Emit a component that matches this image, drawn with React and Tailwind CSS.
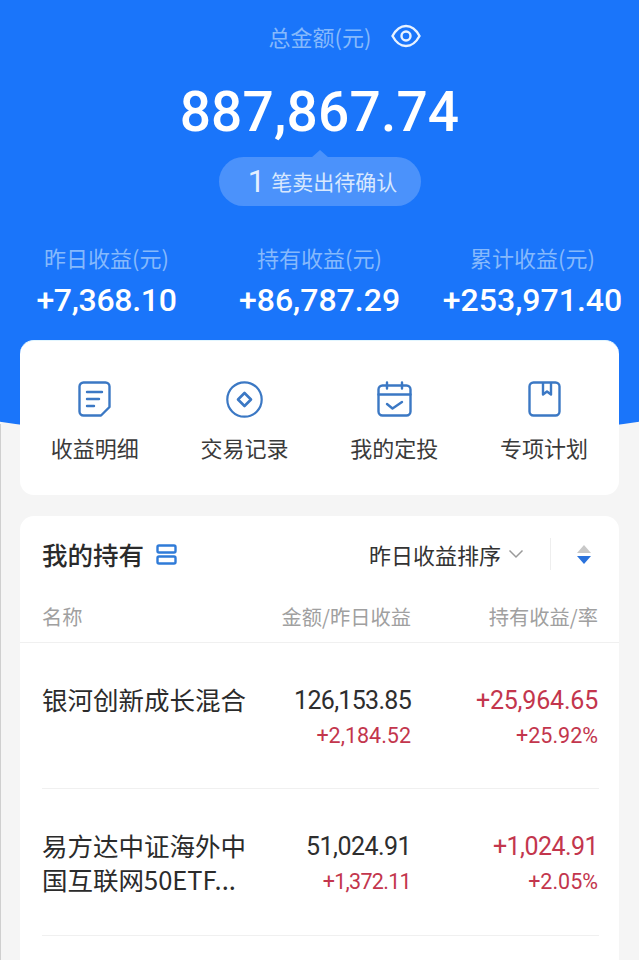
const cjk = "font-['Noto_Sans_CJK_SC','Noto_Sans',sans-serif]"
const num = "font-['Roboto','Noto_Sans_CJK_SC',sans-serif]"

const stats = [
  { label: '昨日收益(元)', value: '+7,368.10', cls: 'tracking-[-0.3px]' },
  { label: '持有收益(元)', value: '+86,787.29', cls: '' },
  { label: '累计收益(元)', value: '+253,971.40', cls: '' },
]

const holdings = [
  {
    name: ['银河创新成长混合'],
    rowCls: 'h-[146px]',
    amount: '126,153.85',
    amountCls: 'tracking-[-0.7px]',
    daily: '+2,184.52',
    dailyCls: '',
    gain: '+25,964.65',
    gainCls: 'tracking-[-0.2px]',
    rate: '+25.92%',
  },
  {
    name: ['易方达中证海外中', '国互联网50ETF...'],
    rowCls: 'h-[147px]',
    amount: '51,024.91',
    amountCls: 'tracking-[-0.55px]',
    daily: '+1,372.11',
    dailyCls: 'tracking-[-0.7px]',
    gain: '+1,024.91',
    gainCls: 'tracking-[-0.55px]',
    rate: '+2.05%',
  },
]

function DocIcon() {
  return (
    <svg width="33" height="36" viewBox="0 0 33 36" fill="none" stroke="#3b78c4" strokeWidth="2.4" strokeLinecap="round" strokeLinejoin="round">
      <path d="M5.500 1.500h22a4 4 0 0 1 4 4V26l-8.500 8.500H5.500a4 4 0 0 1-4-4v-25a4 4 0 0 1 4-4z" />
      <path d="M9 11h15M9 18h12M9 25h7" />
    </svg>
  )
}

function CoinIcon() {
  return (
    <svg width="37" height="37" viewBox="0 0 37 37" fill="none" stroke="#3b78c4" strokeWidth="2.2" strokeLinejoin="round">
      <circle cx="18.500" cy="18.500" r="17.200" />
      <path d="M18.500 12l6.500 6.500-6.500 6.500-6.500-6.500z" strokeWidth="2.6" />
    </svg>
  )
}

function CalendarIcon() {
  return (
    <svg width="35" height="36" viewBox="0 0 35 36" fill="none" stroke="#3b78c4" strokeWidth="2.4" strokeLinecap="round" strokeLinejoin="round">
      <rect x="1.500" y="4.500" width="32" height="30" rx="4" />
      <path d="M1.500 13.500h32M10 1.500v6M25 1.500v6" />
      <path d="M10 23l5.500 4.500L25 21" />
    </svg>
  )
}

function BookIcon() {
  return (
    <svg width="33" height="36" viewBox="0 0 33 36" fill="none" stroke="#3b78c4" strokeWidth="2.4" strokeLinejoin="round">
      <rect x="1.500" y="1.500" width="30" height="33" rx="4" />
      <path d="M15 1.500v12l4-3 4 3v-12" />
    </svg>
  )
}

const actions = [
  { label: '收益明细', icon: <DocIcon /> },
  { label: '交易记录', icon: <CoinIcon /> },
  { label: '我的定投', icon: <CalendarIcon /> },
  { label: '专项计划', icon: <BookIcon /> },
]

export default function App() {
  return (
    <div className={`relative w-[639px] h-[960px] overflow-hidden bg-[#f5f5f5] ${cjk}`}>
      {/* curved blue backdrop behind the summary */}
      <div className="absolute left-0 top-0 w-full h-[445px] bg-[#1a75fa] [clip-path:ellipse(1000px_445px_at_50%_0)]" />
      <div className="absolute left-0 top-[424px] w-px h-[536px] bg-[#cfcfcf]" />

      <div className="relative">
        <div className="h-[340px] flex flex-col items-center">
          <div className="mt-[20px] h-[32px] w-full flex items-center justify-center gap-[20px] pl-[51px]">
            <span className="text-[22px] leading-[32px] text-[#86b9fc]">总金额(元)</span>
            <svg width="30" height="24" viewBox="0 0 30 24" fill="none" stroke="#e8f2ff" strokeWidth="2.4">
              <path d="M1.500 12C5 5.500 9.500 2 15 2s10 3.500 13.500 10C25 18.500 20.500 22 15 22S5 18.500 1.500 12z" />
              <circle cx="15" cy="12" r="4.500" />
            </svg>
          </div>
          <div className={`mt-[30px] h-[60px] text-[55px] leading-[60px] font-medium text-white tracking-[0.2px] ${num}`}>
            887,867.74
          </div>
          <div className="relative mt-[15px] w-[202px] h-[49px] rounded-full bg-[#4b92fb] flex items-center justify-center gap-[6px] pl-[6px]">
            <div className="absolute top-[-7px] left-[92px] w-0 h-0 border-x-[9px] border-x-transparent border-b-[8px] border-b-[#4b92fb]" />
            <span className={`text-[31px] leading-none text-[#e4efff] ${num}`}>1</span>
            <span className="text-[21px] leading-none text-[#d8e8fe]">笔卖出待确认</span>
          </div>
          <div className="mt-[35px] w-full flex">
            {stats.map((s) => (
              <div key={s.label} className="w-[213px] flex flex-col items-center">
                <span className="text-[22px] leading-[32px] text-[#86b9fc]">{s.label}</span>
                <span className={`mt-[8px] text-[32px] leading-[38px] font-medium text-white whitespace-nowrap ${s.cls} ${num}`}>{s.value}</span>
              </div>
            ))}
          </div>
        </div>

        <div className="mx-[20px] h-[155px] rounded-[14px] bg-white border-t border-[#e2f6ff] flex">
          {actions.map((a) => (
            <div key={a.label} className="w-[150px] flex flex-col items-center pt-[39px]">
              <div className="h-[38px] flex items-center justify-center">{a.icon}</div>
              <span className="mt-[13px] text-[22px] leading-[32px] text-[#3a3a3a]">{a.label}</span>
            </div>
          ))}
        </div>

        <div className="mx-[20px] mt-[21px] rounded-t-[14px] bg-white h-[444px]">
          <div className="h-[76px] flex items-center pl-[22px] pr-[22px]">
            <span className="text-[25.500px] leading-[32px] font-medium text-[#2b2b2b]">我的持有</span>
            <svg className="ml-[12px]" width="21" height="21" viewBox="0 0 21 21" fill="none" stroke="#2f7bd8" strokeWidth="2.400">
              <rect x="1.500" y="1.500" width="18" height="7" rx="1.500" />
              <rect x="1.500" y="12.500" width="18" height="7" rx="1.500" />
            </svg>
            <span className="ml-auto text-[22px] leading-[32px] text-[#333333]">昨日收益排序</span>
            <svg className="ml-[7px]" width="16" height="10" viewBox="0 0 16 10" fill="none" stroke="#9a9a9a" strokeWidth="1.500">
              <path d="M1.500 1.500L8 8l6.500-6.500" />
            </svg>
            <div className="ml-[26px] w-px h-[32px] bg-[#eeeeee]" />
            <div className="ml-[26px] mr-[6px] flex flex-col items-center gap-[3px]">
              <div className="w-0 h-0 border-x-[7px] border-x-transparent border-b-[8px] border-b-[#c8c8c8]" />
              <div className="w-0 h-0 border-x-[7px] border-x-transparent border-t-[8px] border-t-[#2a72dc]" />
            </div>
          </div>

          <div className="h-[51px] flex items-center pl-[22px] pr-[21px] border-b border-[#f0f0f0] text-[20.250px] leading-[30px] text-[#a0a0a0]">
            <span>名称</span>
            <span className="ml-auto w-[220px] text-right">金额/昨日收益</span>
            <span className="w-[187px] text-right">持有收益/率</span>
          </div>

          <div className="pl-[22px] pr-[20px]">
            {holdings.map((h) => (
              <div key={h.amount} className={`${h.rowCls} flex items-start pt-[39px] border-b border-[#f0f0f0]`}>
                <div className="flex-1 min-w-0 whitespace-nowrap text-[25.500px] leading-[34px] text-[#2b2b2b]">
                  {h.name.map((line) => (
                    <div key={line}>{line}</div>
                  ))}
                </div>
                <div className={`w-[170px] shrink-0 pt-[2px] flex flex-col items-end ${num}`}>
                  <span className={`text-[25px] leading-[34px] text-[#2e2e2e] ${h.amountCls}`}>{h.amount}</span>
                  <span className={`mt-[1px] text-[21.500px] leading-[34px] text-[#c3364d] ${h.dailyCls}`}>{h.daily}</span>
                </div>
                <div className={`w-[188px] shrink-0 pr-[1px] pt-[2px] flex flex-col items-end ${num}`}>
                  <span className={`text-[25px] leading-[34px] text-[#c3364d] ${h.gainCls}`}>{h.gain}</span>
                  <span className="mt-[1px] text-[21.500px] leading-[34px] text-[#c3364d]">{h.rate}</span>
                </div>
              </div>
            ))}
          </div>
        </div>
      </div>
    </div>
  )
}
